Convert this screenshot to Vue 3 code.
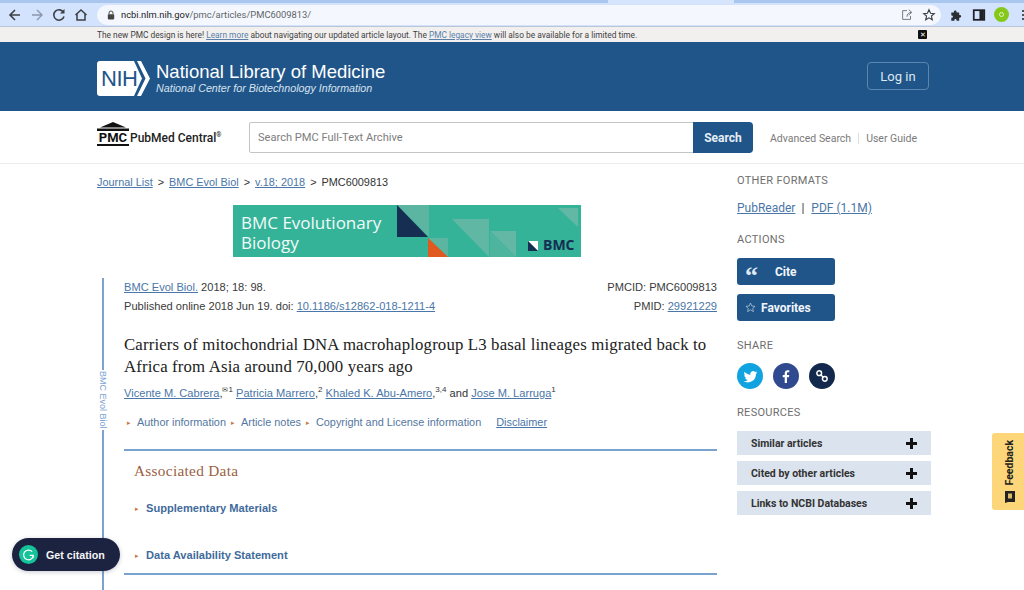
<script setup>
const authors = [
  { name: 'Vicente M. Cabrera', sup: '1', mail: true, sep: ', ' },
  { name: 'Patricia Marrero', sup: '2', sep: ', ' },
  { name: 'Khaled K. Abu-Amero', sup: '3,4', sep: ', ' },
]
const resources = ['Similar articles', 'Cited by other articles', 'Links to NCBI Databases']
</script>

<template>
  <div class="page">
    <div class="tabstrip"><span class="tabactive"></span></div>
    <div class="toolbar">
      <svg class="tb" viewBox="0 0 16 16" width="16" height="16"><path d="M13 8H3.500M8 3 3 8l5 5" fill="none" stroke="#3c4043" stroke-width="1.600"/></svg>
      <svg class="tb" viewBox="0 0 16 16" width="16" height="16"><path d="M3 8h9.500M8 3l5 5-5 5" fill="none" stroke="#8b97ab" stroke-width="1.400"/></svg>
      <svg class="tb" viewBox="0 0 16 16" width="16" height="16"><path d="M12.600 5.500A5.200 5.200 0 1 0 13 9.500" fill="none" stroke="#3c4043" stroke-width="1.600"/><path d="M13.500 2v4.500H9z" fill="#3c4043"/></svg>
      <svg class="tb home" viewBox="0 0 16 16" width="16" height="16"><path d="M2.500 8 8 3l5.500 5M4 7v6h8V7" fill="none" stroke="#3c4043" stroke-width="1.500"/></svg>
      <div class="omni">
        <svg viewBox="0 0 10 12" width="8" height="10"><path d="M2.500 5V3.500a2.500 2.500 0 0 1 5 0V5" fill="none" stroke="#444" stroke-width="1.200"/><rect x="1" y="5" width="8" height="6.500" rx="1" fill="#444"/></svg>
        <span class="url"><b>ncbi.nlm.nih.gov</b>/pmc/articles/PMC6009813/</span>
        <span class="spacer"></span>
        <svg viewBox="0 0 16 16" width="14" height="14"><path d="M8 3h-5v10h9V9M8 10c0-3 2-5 5-5M10 2l3.500 3L10 8" fill="none" stroke="#72777d" stroke-width="1.100"/></svg>
        <svg class="star" viewBox="0 0 16 16" width="14" height="14"><path d="m8 2 1.800 4 4.200.4-3.200 2.800 1 4.300L8 11.200 4.200 13.500l1-4.300L2 6.400 6.200 6z" fill="none" stroke="#3c4043" stroke-width="1.300"/></svg>
      </div>
      <svg class="puzzle" viewBox="0 0 16 16" width="14" height="14"><path d="M1.500 5h3c-.5-3 3.500-3 3 0h3v3c3-.5 3 3.500 0 3v3.500h-3c.5-2.500-3-2.500-2.500 0h-3.500v-3.500c2.500.5 2.500-3 0-2.500z" fill="#2b2e33"/></svg>
      <svg class="panel" viewBox="0 0 16 16" width="14" height="14"><rect x="2" y="2.500" width="12" height="11" fill="none" stroke="#202124" stroke-width="2"/><rect x="8.500" y="2.500" width="5" height="11" fill="#202124"/></svg>
      <span class="avatar"><i></i></span>
      <span class="kebab"><i></i><i></i><i></i></span>
    </div>

    <div class="notice">
      <div class="notice-text">The new PMC design is here! <a>Learn more</a> about navigating our updated article layout. The <a>PMC legacy view</a> will also be available for a limited time.</div>
      <span class="closex">✕</span>
    </div>

    <header class="nih">
      <div class="nih-logo">
        <svg viewBox="0 0 54 35" width="54" height="35"><path d="M3 0h34l8 17.500L37 35H3a3 3 0 0 1-3-3V3a3 3 0 0 1 3-3z" fill="#fff"/><path d="M40 0h4l9 17.500L44 35h-4l8.500-17.500z" fill="#fff"/></svg>
        <span class="nih-word">NIH</span>
      </div>
      <div class="nih-title">
        <div class="nlm">National Library of Medicine</div>
        <div class="ncbi">National Center for Biotechnology Information</div>
      </div>
      <span class="spacer"></span>
      <button class="login">Log in</button>
    </header>

    <div class="searchbar">
      <div class="pmc-logo">
        <svg viewBox="0 0 32 9" width="32" height="9" class="roof"><path d="M16 0 29 5.500H3zM0 6.500h32V9H0z" fill="#111"/></svg>
        <span class="pmc-word">PMC</span>
      </div>
      <span class="pubmed">PubMed Central<sup>®</sup></span>
      <div class="search">
        <span class="search-ph">Search PMC Full-Text Archive</span>
        <button class="search-btn">Search</button>
      </div>
      <a class="util">Advanced Search</a>
      <span class="util-sep"></span>
      <a class="util">User Guide</a>
    </div>

    <main class="content">
      <div class="col-main">
        <nav class="crumbs">
          <a>Journal List</a><span class="gt">&gt;</span><a>BMC Evol Biol</a><span class="gt">&gt;</span><a>v.18; 2018</a><span class="gt">&gt;</span><span>PMC6009813</span>
        </nav>

        <div class="banner">
          <svg class="banner-art" viewBox="0 0 348 52" width="348" height="52">
            <path d="M164 0h32v32z" fill="#5bb5a0"/>
            <path d="M164 0l31 32h-31z" fill="#152e52"/>
            <path d="M195 33h20v19z" fill="#5bb5a0"/>
            <path d="M195 33l20 19h-20z" fill="#e2591f"/>
            <path d="M219 14h37v38z" fill="#60b8a4"/>
            <path d="M257 26h26v26z" fill="#62b8a5"/>
            <path d="M257 26l26 26h-26z" fill="#4db49d"/>
            <path d="M325 3h20v19z" fill="#62b8a5"/>
            <path d="M295 36h10v10z" fill="#fff"/>
            <path d="M295 36l10 10h-10z" fill="#152e52"/>
          </svg>
          <div class="banner-title">BMC Evolutionary<br>Biology</div>
          <span class="banner-bmc">BMC</span>
        </div>

        <div class="article">
          <aside class="rail">
            <span class="rail-line short"></span>
            <span class="rail-label">BMC Evol Biol</span>
            <span class="rail-line"></span>
          </aside>
          <div class="article-body">
            <div class="meta">
              <div>
                <div><a>BMC Evol Biol.</a> 2018; 18: 98.</div>
                <div class="meta-2">Published online 2018 Jun 19. doi: <a>10.1186/s12862-018-1211-4</a></div>
              </div>
              <div class="meta-right">
                <div>PMCID: PMC6009813</div>
                <div class="meta-2">PMID: <a>29921229</a></div>
              </div>
            </div>

            <h1 class="title">Carriers of mitochondrial DNA macrohaplogroup L3 basal lineages migrated back to Africa from Asia around 70,000 years ago</h1>

            <div class="authors">
              <template v-for="a in authors" :key="a.name">
                <a>{{ a.name }}</a><span>,</span><sup><span v-if="a.mail" class="mail">✉</span>{{ a.sup }}</sup>{{ ' ' }}
              </template>
              and <a>Jose M. Larruga</a><sup>1</sup>
            </div>

            <div class="expanders">
              <span class="tri">▸</span><span class="exp">Author information</span>
              <span class="tri">▸</span><span class="exp">Article notes</span>
              <span class="tri">▸</span><span class="exp">Copyright and License information</span>
              <a class="disclaimer">Disclaimer</a>
            </div>

            <section class="assoc">
              <h2>Associated Data</h2>
              <div class="assoc-row first"><span class="tri">▸</span><b>Supplementary Materials</b></div>
              <div class="assoc-row"><span class="tri">▸</span><b>Data Availability Statement</b></div>
            </section>
          </div>
        </div>
      </div>

      <aside class="col-side">
        <h3 class="side-h first">OTHER FORMATS</h3>
        <div class="formats"><a>PubReader</a><span class="bar">|</span><a>PDF (1.1M)</a></div>

        <h3 class="side-h actions">ACTIONS</h3>
        <button class="act cite">
          <span class="quote">“</span><span>Cite</span>
        </button>
        <button class="act fav">
          <svg viewBox="0 0 16 16" width="11" height="11"><path d="m8 1.500 2 4.300 4.600.5-3.400 3.100 1 4.600L8 11.300l-4.200 2.700 1-4.600L1.400 6.300 6 5.800z" fill="none" stroke="#b6c8dc" stroke-width="1.100"/></svg>
          <span>Favorites</span>
        </button>

        <h3 class="side-h share">SHARE</h3>
        <div class="shares">
          <span class="circle tw">
            <svg viewBox="0 0 24 24" width="15" height="15"><path d="M23 5.500c-.8.400-1.700.6-2.600.7 1-.6 1.700-1.400 2-2.500-.9.500-1.900.9-2.900 1.100A4.500 4.500 0 0 0 11.800 9C8 8.800 4.700 7 2.500 4.200c-1.200 2-.6 4.600 1.400 6-.7 0-1.400-.2-2-.5 0 2.200 1.500 4 3.600 4.500-.7.200-1.400.2-2 .1.600 1.800 2.200 3 4.200 3.100A9 9 0 0 1 1 19.300 12.800 12.800 0 0 0 20.700 8c.9-.7 1.700-1.500 2.300-2.500z" fill="#fff"/></svg>
          </span>
          <span class="circle fb">
            <svg viewBox="0 0 12 20" width="8" height="13"><path d="M7.500 20v-9h3l.5-3.500H7.500V5.300c0-1 .3-1.700 1.800-1.700H11V.400C10.700.300 9.700.200 8.500.200 6 .2 4 1.800 4 4.900v2.600H1V11h3v9z" fill="#fff"/></svg>
          </span>
          <span class="circle ln">
            <svg viewBox="0 0 16 16" width="14" height="14"><g fill="none" stroke="#fff" stroke-width="1.700"><circle cx="4.800" cy="4.800" r="2.700"/><circle cx="11.200" cy="11.200" r="2.700"/><path d="M6.500 6.500l3 3"/></g></svg>
          </span>
        </div>

        <h3 class="side-h res">RESOURCES</h3>
        <div class="res-list">
          <div v-for="r in resources" :key="r" class="res-row">
            <span>{{ r }}</span>
            <svg viewBox="0 0 11 11" width="11" height="11"><path d="M4 0h3v4h4v3H7v4H4V7H0V4h4z" fill="#111"/></svg>
          </div>
        </div>
      </aside>
    </main>

    <div class="citation">
      <span class="g-badge">
        <svg viewBox="0 0 16 16" width="13" height="13"><path d="M12.500 4.500A6 6 0 1 0 14 9H9.500" fill="none" stroke="#fff" stroke-width="1.500"/><path d="M13.500 9.500v3" stroke="#fff" stroke-width="1.500"/></svg>
      </span>
      <span>Get citation</span>
    </div>

    <div class="feedback">
      <span class="fb-text">Feedback</span>
      <svg viewBox="0 0 12 12" width="12" height="12"><path d="M1 0h10v11H4l-3 1z" fill="#222"/><path d="M4 2.500h4v5H4z" fill="#d9bd68"/></svg>
    </div>
  </div>
</template>

<style>
html, body { margin: 0; padding: 0; background: #fff; overflow: hidden; }
</style>

<style scoped>
.page { position: relative; width: 1024px; height: 590px; overflow: hidden; font-family: "Liberation Sans", Arial, sans-serif; color: #333; }
a { color: #4a76a8; text-decoration: underline; }
.spacer { flex: 1; }

.tabstrip { height: 3px; background: #a8c6ee; position: relative; }
.tabactive { position: absolute; left: 608px; top: 0; width: 126px; height: 3px; background: #d6e5fb; }
.toolbar { height: 23px; background: #d3e3fd; display: flex; align-items: center; padding-left: 7px; border-bottom: 1px solid #b9c6d9; }
.tb { flex: none; margin-right: 6px; }
.home { margin-right: 8px; }
.omni { width: 844px; flex: none; height: 20px; border-radius: 10px; background: #f4f8fe; display: flex; align-items: center; padding: 0 5px 0 10px; box-sizing: border-box; }
.url { font: 9.400px "Roboto", sans-serif; color: #5f6368; margin-left: 6px; }
.url b { font-weight: 400; color: #202124; }
.star { margin-left: 8px; }
.puzzle { margin-left: 9px; flex: none; }
.panel { margin-left: 8px; flex: none; }
.avatar { width: 15px; height: 15px; flex: none; border-radius: 50%; background: #86c81a; margin-left: 8px; display: flex; align-items: center; justify-content: center; }
.avatar i { width: 5px; height: 5px; border-radius: 50%; border: 1px solid #e8f4c8; box-sizing: border-box; }
.kebab { display: flex; flex-direction: column; gap: 2px; margin-left: 13px; }
.kebab i { width: 2px; height: 2px; background: #222; border-radius: 50%; }

.notice { height: 15px; background: #f1f0ef; position: relative; display: flex; align-items: center; padding-left: 97px; }
.notice-text { font: 8.360px "Roboto", sans-serif; color: #3f3f3f; }
.notice-text a { color: #5a7fa8; }
.closex { position: absolute; left: 918px; top: 3px; width: 9px; height: 9px; background: #111; color: #fff; font-size: 7px; line-height: 9px; text-align: center; border-radius: 1px; }

.nih { height: 69px; background: #20558a; display: flex; align-items: center; padding: 0 95px 0 97px; }
.nih-logo { display: flex; align-items: center; position: relative; margin-top: 4px; }
.nih-logo svg { display: block; }
.nih-word { position: absolute; left: 4px; top: 5px; font-size: 22px; line-height: 26px; letter-spacing: -0.500px; color: #20558a; }
.nih-title { margin-left: 5px; color: #fff; margin-top: 4px; }
.nlm { font-size: 18.500px; line-height: 20px; color: #fff; }
.ncbi { font-size: 10.700px; line-height: 13px; font-style: italic; color: #d8e3ee; }
.login { width: 62px; height: 28px; box-sizing: border-box; background: transparent; border: 1px solid #5a86b0; border-radius: 4px; color: #dfe8f0; font: 13px "Roboto", sans-serif; padding: 0; margin-top: -1px; }

.searchbar { height: 52px; border-bottom: 1px solid #ececec; display: flex; align-items: center; padding-left: 97px; }
.pmc-logo { width: 32px; display: flex; flex-direction: column; align-items: center; margin-top: -7px; }
.roof { display: block; }
.pmc-word { font: 700 13px/13px "Roboto", sans-serif; color: #111; border-bottom: 2px solid #111; width: 32px; text-align: center; }
.pubmed { font: 500 12px "Roboto", sans-serif; color: #222; margin-left: 1px; margin-top: 2px; width: 92px; }
.pubmed sup { font-size: 6.500px; }
.search { width: 504px; height: 31px; box-sizing: border-box; border: 1px solid #c4c4c4; border-radius: 2px 4px 4px 2px; display: flex; align-items: center; justify-content: space-between; margin-left: 27px; margin-top: 1px; }
.search-ph { font: 11.100px "Roboto", sans-serif; color: #7d7d7d; margin-left: 8px; }
.search-btn { width: 60px; height: 31px; margin-right: -1px; background: #20558a; border: 0; border-radius: 0 4px 4px 0; color: #e6eef5; font: 700 12px "Roboto", sans-serif; padding: 0; }
.util { font: 10.500px "Roboto", sans-serif; color: #7a7a7a; text-decoration: none; margin-top: 2px; }
.search + .util { margin-left: 17px; }
.util-sep { width: 1px; height: 11px; background: #ddd; margin: 2px 7px 0; }

.content { display: flex; padding-left: 97px; }
.col-main { width: 620px; flex: none; }
.crumbs { font-size: 10.900px; margin-top: 12px; line-height: 13px; color: #333; }
.gt { margin: 0 5px; }

.banner { width: 348px; height: 52px; margin: 16px 0 0 136px; background: #35b399; position: relative; color: #f2faf8; overflow: hidden; }
.banner-title { position: absolute; left: 8px; top: 8px; font: 500 17px/20px "Open Sans", sans-serif; }
.banner-art { position: absolute; left: 0; top: 0; }
.banner-bmc { position: absolute; left: 310px; top: 33px; color: #152e52; font: 700 14px/14px "Open Sans", sans-serif; }

.article { display: flex; margin-top: 21px; }
.rail { width: 27px; flex: none; display: flex; flex-direction: column; align-items: flex-start; padding-left: 5px; box-sizing: border-box; }
.rail-line { width: 2px; flex: 1; background: #7ba3d0; }
.rail-line.short { flex: none; height: 92px; }
.rail-label { writing-mode: vertical-rl; font-size: 9px; color: #7ba3d0; height: 60px; line-height: 10px; margin-left: -4px; text-align: center; }
.article-body { width: 593px; height: 400px; }
.meta { display: flex; justify-content: space-between; font-size: 11.100px; line-height: 13px; margin-top: 3px; color: #3a3a3a; }
.meta-2 { margin-top: 6px; }
.meta-right { text-align: right; }
.title { font: 400 16.800px/22px "Liberation Serif", serif; color: #222; margin: 21px 0 0; letter-spacing: .15px; }
.authors { font-size: 11.100px; line-height: 14px; margin-top: 8px; color: #333; }
.authors sup { font-size: 8px; line-height: 0; }
.mail { font-size: 7px; }
.expanders { font-size: 10.900px; line-height: 13px; margin-top: 16px; color: #54779f; display: flex; align-items: center; padding-left: 3px; }
.tri { color: #c87a4a; font-size: 7px; width: 5px; flex: none; }
.expanders .tri { margin-right: 5px; }
.exp { margin-right: 5px; }
.disclaimer { margin-left: 10px; }
.assoc { border-top: 2px solid #7ba3d0; border-bottom: 2px solid #7ba3d0; margin-top: 20px; height: 126px; box-sizing: border-box; padding-left: 10px; }
.assoc h2 { font: 400 15.300px/18px "Liberation Serif", serif; color: #9b5f44; margin: 11px 0 0; letter-spacing: .3px; }
.assoc-row { font-size: 11.100px; line-height: 13px; color: #3f6b9c; display: flex; align-items: center; margin-top: 34px; }
.assoc-row.first { margin-top: 22px; }
.assoc-row .tri { margin: 0 6px 0 1px; }

.col-side { width: 194px; margin-left: 20px; flex: none; }
.side-h { font: 400 11px/13px "Roboto", sans-serif; color: #6e6e6e; letter-spacing: .3px; margin: 0; }
.side-h.first { margin-top: 10px; }
.formats { font: 12px/14px "Roboto", sans-serif; margin-top: 14px; color: #333; }
.bar { margin: 0 7px 0 6px; }
.side-h.actions { margin-top: 18px; }
.act { display: flex; align-items: center; width: 98px; height: 27px; background: #20558a; border: 0; border-radius: 3px; color: #f2f6fa; font: 700 12px "Roboto", sans-serif; padding: 0; margin-top: 9px; }
.cite { margin-top: 12px; padding-left: 8px; }
.quote { font: 700 26px/16px "Liberation Serif", serif; width: 30px; text-align: left; color: #dfe8f1; margin-top: 8px; }
.fav { padding-left: 8px; gap: 5px; }
.side-h.share { margin-top: 18px; }
.shares { display: flex; gap: 10px; margin-top: 11px; }
.circle { width: 26px; height: 26px; border-radius: 50%; display: flex; align-items: center; justify-content: center; }
.tw { background: #11a3e0; }
.fb { background: #2f4a8f; }
.ln { background: #12294d; }
.side-h.res { margin-top: 17px; }
.res-list { display: flex; flex-direction: column; gap: 6px; margin-top: 12px; width: 194px; }
.res-row { height: 24px; background: #dbe3ee; display: flex; align-items: center; justify-content: space-between; padding: 0 14px; box-sizing: border-box; font: 700 10.500px "Roboto", sans-serif; color: #333; }
.res-row svg { flex: none; }

.citation { position: absolute; left: 12px; top: 538px; width: 108px; height: 33px; border-radius: 17px; background: #1c2340; color: #f4f5f7; font: 700 10.700px "Liberation Sans", sans-serif; display: flex; align-items: center; gap: 8px; padding-left: 7px; box-sizing: border-box; box-shadow: 0 1px 4px rgba(30,40,70,.25); }
.g-badge { width: 19px; height: 19px; border-radius: 50%; background: #15c39a; display: flex; align-items: center; justify-content: center; }
.feedback { position: absolute; left: 992px; top: 433px; width: 32px; height: 77px; background: #fcd678; border-radius: 3px 0 0 3px; display: flex; flex-direction: column; align-items: center; justify-content: flex-end; padding: 0 0 7px 3px; box-sizing: border-box; gap: 5px; }
.fb-text { writing-mode: vertical-rl; transform: rotate(180deg); font: 700 10.500px "Roboto", sans-serif; color: #222; }
</style>
